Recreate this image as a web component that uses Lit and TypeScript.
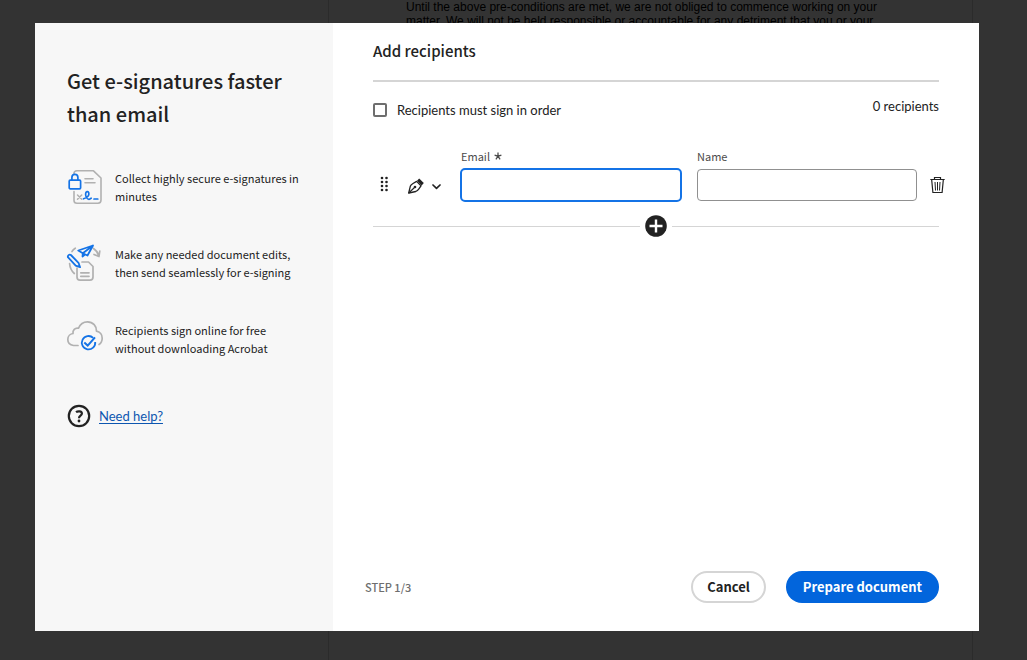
import { LitElement, html, css, svg } from "lit";
import { customElement, state } from "lit/decorators.js";

const secureIcon = html`<svg class="art" viewBox="0 0 36 36" fill="none" aria-hidden="true">
  <g stroke="#b1b1b1" stroke-width="1.6" stroke-linecap="round" stroke-linejoin="round">
    <path d="M7 5.500V4.600C7 2.400 8.400 1.800 10 1.800H26.500L34 9V31C34 33.200 33 34.200 31 34.200H10C8 34.200 7 33.200 7 31.500V22.500"/>
    <path d="M18 9.800H26M18 13.800H28"/>
    <path d="M10.500 26l4.200 4.200M14.700 26L10.500 30.200" stroke-width="1.500"/>
  </g>
  <g stroke="#1473e6" stroke-width="1.700" stroke-linecap="round" stroke-linejoin="round">
    <rect x="2.200" y="11.200" width="11.400" height="8.600" rx="1"/>
    <path d="M4.900 10.900V8.400a3 3 0 0 1 6 0V10.900"/>
    <path d="M16.500 29.800C20 28.800 22.300 26.500 21.800 24C21.300 21.900 18.600 22.200 18.600 25C18.600 28.300 20.300 30.300 22 30.300C23.300 30.300 23.700 29.600 24.200 29.200M27 30H30.800"/>
  </g>
</svg>`;

const editIcon = html`<svg class="art" viewBox="0 0 36 36" fill="none" aria-hidden="true">
  <g stroke="#b1b1b1" stroke-width="1.700" stroke-linecap="round" stroke-linejoin="round">
    <path d="M5 6.500C5.800 5.200 7 4 8.300 3.200M2.600 18.500C2.900 22.500 4.500 26 7.300 28.500"/>
    <path d="M26.500 3.500C29 5.200 31 7.300 31.800 11M27 9.500L32 11.500L32.800 6"/>
    <path d="M15 17H21.500L26 21.500V32C26 34 25 35.200 23 35.200H13C11 35.200 10 34 10 32V23"/>
    <path d="M13.800 27.800H22M13.800 31.300H22"/>
  </g>
  <g stroke="#1473e6" stroke-width="1.800" stroke-linejoin="round">
    <path d="M.9 12.200C.5 10.600 2.200 9 3.900 10L11.500 17.800L13.100 22.200L8.700 20.600Z"/>
    <path d="M11.300 5.500L26 .5L20.500 10.500L15.800 8.200ZM26 .5L15.800 8.200L15.500 11.500L18 9.500"/>
  </g>
</svg>`;

const cloudIcon = html`<svg class="art" viewBox="0 0 36 36" fill="none" aria-hidden="true">
  <path d="M11 24.500H6.500C3.200 24 .8 21.800 .8 18.500C.8 14.800 3.500 12.800 6 12.500C5.500 9.500 8 6.300 11.500 7.200C13.200 3 16.500 .8 20.500 .8C26 .8 29.800 5.200 29.500 10.200C33 10.800 35.200 13.800 35.200 17.200C35.200 20 34 22.200 32 23.500" stroke="#b1b1b1" stroke-width="1.700" stroke-linecap="round" stroke-linejoin="round"/>
  <path d="M26.200 16.900A6.700 6.700 0 1 0 28.200 21" stroke="#1473e6" stroke-width="1.800"/>
  <path d="M17.300 21.500L20.700 24.600L28 16.400" stroke="#1473e6" stroke-width="2"/>
</svg>`;

@customElement("app-root")
export class AppRoot extends LitElement {
  @state() private ordered = false;

  private benefits = [
    { icon: secureIcon, text: "Collect highly secure e-signatures in minutes" },
    { icon: editIcon, text: "Make any needed document edits, then send seamlessly for e-signing" },
    { icon: cloudIcon, text: "Recipients sign online for free without downloading Acrobat" },
  ];

  static styles = css`
    :host {
      display: block;
      position: relative;
      height: 100vh;
      overflow: hidden;
      background: #333;
      font-family: "Noto Sans CJK JP", "Noto Sans", sans-serif;
      color: #222;
    }
    * { box-sizing: border-box; }
    h1, h2, p, ul { margin: 0; padding: 0; }
    button { font: inherit; color: inherit; background: none; border: 0; padding: 0; cursor: pointer; }
    svg { display: block; flex: none; }

    .document {
      height: 100%;
      margin: 0 54px 0 328px;
      padding: 0 77px;
      border: solid #2b2b2b;
      border-width: 0 1px;
      font: 12px/14px "Liberation Sans", Arial, sans-serif;
      color: #000;
    }
    .overlay {
      position: absolute;
      inset: 0;
      display: flex;
      padding: 23px 48px 29px 35px;
    }
    .dialog { flex: 1; display: flex; background: #fff; min-width: 0; }

    .promo { flex: 0 0 298px; padding: 41px 32px; background: #f7f7f7; }
    .promo-title { font-size: 20px; line-height: 33px; font-weight: 500; }
    .benefits { list-style: none; display: grid; gap: 40px; padding-top: 39px; }
    .benefit { display: flex; align-items: center; gap: 12px; font-size: 11px; line-height: 18px; }
    .art { width: 36px; height: 36px; overflow: visible; }
    .help { display: flex; align-items: center; gap: 8px; margin-top: 47px; font-family: Lato, sans-serif; font-size: 13px; line-height: 24px; }
    .help a { color: #0d56b0; text-underline-offset: 2px; }

    .main { flex: 1; min-width: 0; display: flex; flex-direction: column; padding: 16px 40px 28px; }
    .main-title { font-size: 15px; line-height: 24px; font-weight: 500; padding-bottom: 17px; border-bottom: 2px solid #d5d5d5; }
    .options { display: flex; justify-content: space-between; padding-top: 15px; font-family: Lato, sans-serif; font-size: 13px; line-height: 18px; }
    .order { display: flex; align-items: center; gap: 10px; padding-top: 4px; }
    .order input {
      appearance: none;
      width: 14px;
      height: 14px;
      margin: 0;
      border: 2px solid #6e6e6e;
      border-radius: 2px;
      background: #fff;
    }
    .order input:checked { background: #1473e6; border-color: #1473e6; }

    .row { display: flex; align-items: flex-end; margin-right: -8px; padding-top: 28px; }
    .tool { display: flex; align-items: center; height: 34px; }
    .drag { width: 34px; padding-left: 6px; }
    .role { width: 53px; gap: 7px; }
    .fields { flex: 1; min-width: 0; display: grid; grid-template-columns: 222px 1fr; gap: 15px; }
    .field { display: grid; gap: 3px; font-size: 11px; line-height: 18px; color: #4b4b4b; }
    .label { display: flex; align-items: center; gap: 4px; padding-left: 1px; }
    .field input {
      width: 100%;
      min-width: 0;
      height: 34px;
      padding: 0 10px;
      border: 2px solid #1473e6;
      border-radius: 5px;
      outline: 0;
      font: inherit;
      background: #fff;
    }
    .field .plain { height: 32px; margin: 1px 0; border: 1px solid #909090; border-radius: 4px; }
    .field .flush { padding-left: 0; }
    .remove { width: 30px; padding-left: 13px; }

    .add { display: flex; align-items: center; gap: 5px; padding-top: 13px; }
    .rule { flex: 1; height: 1px; background: #d5d5d5; }

    .footer { display: flex; align-items: center; gap: 20px; margin-top: auto; margin-left: -8px; }
    .step { flex: 1; font-size: 11px; line-height: 16px; font-weight: 500; color: #6e6e6e; }
    .btn { height: 32px; padding: 0 14px; border-radius: 16px; font-size: 13px; line-height: 18px; font-weight: 700; white-space: nowrap; }
    .cancel { border: 2px solid #d5d5d5; }
    .primary { background: #0265dc; color: #fff; padding: 0 17px; }
  `;

  render() {
    return html`
      <div class="document">
        <p>Until the above pre-conditions are met, we are not obliged to commence working on your</p>
        <p>matter. We will not be held responsible or accountable for any detriment that you or your</p>
      </div>
      <div class="overlay">
        <section class="dialog" role="dialog" aria-labelledby="title">
          <aside class="promo">
            <h1 class="promo-title">Get e-signatures faster than email</h1>
            <ul class="benefits">
              ${this.benefits.map((b) => html`<li class="benefit">${b.icon}<span>${b.text}</span></li>`)}
            </ul>
            <div class="help">
              <svg width="24" height="24" viewBox="0 0 24 24" fill="none" aria-hidden="true">
                <circle cx="12" cy="12" r="10.200" stroke="#222" stroke-width="2.200"/>
                <path d="M9 8.200C10.500 7.100 14.900 6.700 14.900 9.600C14.900 11.900 12 11.600 12 14.300" stroke="#222" stroke-width="2.200"/>
                <circle cx="12" cy="17" r="1.400" fill="#222"/>
              </svg>
              <a href="#help">Need help?</a>
            </div>
          </aside>
          <div class="main">
            <h2 class="main-title" id="title">Add recipients</h2>
            <div class="options">
              <label class="order">
                <input type="checkbox" .checked=${this.ordered}
                  @change=${(e: Event) => (this.ordered = (e.target as HTMLInputElement).checked)} />
                Recipients must sign in order
              </label>
              <span>0 recipients</span>
            </div>
            <div class="row">
              <button class="tool drag" aria-label="Reorder recipient">
                <svg width="10" height="18" viewBox="0 0 10 18" fill="#222">
                  ${[2, 6, 10, 14].map((y) => svg`<circle cx="3" cy=${y} r="1.300"/><circle cx="7.500" cy=${y} r="1.300"/>`)}
                </svg>
              </button>
              <button class="tool role" aria-label="Recipient role">
                <svg width="18" height="18" viewBox="0 0 18 18" fill="none" stroke="#222">
                  <path d="M1.700 17L3.300 10.300C3.700 9 4.800 8.200 6 7.500L9.600 5.400L14 9.800L11.700 13.200C10.900 14.400 10 15.100 8.800 15.500Z" stroke-width="1.300" stroke-linejoin="round"/>
                  <path d="M1.700 17L7.500 11.500" stroke-width="1.100"/>
                  <circle cx="8" cy="11" r="1.300" fill="#222" stroke="none"/>
                  <path d="M10 4.700L12.200 2.500L16.800 7.100L14.700 9.400Z" fill="#222" stroke="none"/>
                </svg>
                <svg width="10" height="12" viewBox="0 0 10 12" fill="none">
                  <path d="M1 6L4.500 9.300L8 6" stroke="#222" stroke-width="1.700" stroke-linecap="round" stroke-linejoin="round"/>
                </svg>
              </button>
              <div class="fields">
                <label class="field">
                  <span class="label">Email
                    <svg width="8" height="8" viewBox="0 0 8 8" aria-hidden="true">
                      <path d="M4 .5V4.200M.6 3.200L4 4.200L7.400 3.200M1.900 7.300L4 4.200L6.100 7.300" fill="none" stroke="#4b4b4b" stroke-width="1.300"/>
                    </svg>
                  </span>
                  <input type="email" required />
                </label>
                <label class="field">
                  <span class="label flush">Name</span>
                  <input class="plain" type="text" />
                </label>
              </div>
              <button class="tool remove" aria-label="Remove recipient">
                <svg width="16" height="18" viewBox="0 0 16 18" fill="none" stroke="#222">
                  <path d="M.3 3.500H14.700M4.500 3.300V1.500H10.500V3.300" stroke-width="1.200"/>
                  <path d="M1.700 4L2.900 16.500H12.100L13.300 4" stroke-width="1.200"/>
                  <path d="M5 6L5.500 14.500M7.500 6V14.500M10 6L9.500 14.500"/>
                </svg>
              </button>
            </div>
            <div class="add">
              <span class="rule"></span>
              <button aria-label="Add recipient">
                <svg width="22" height="22" viewBox="0 0 22 22">
                  <circle cx="11" cy="11" r="10.800" fill="#222"/>
                  <path d="M11 4.500V17.500M4.500 11H17.500" stroke="#fff" stroke-width="2.400"/>
                </svg>
              </button>
              <span class="rule"></span>
            </div>
            <div class="footer">
              <span class="step">STEP 1/3</span>
              <button class="btn cancel">Cancel</button>
              <button class="btn primary">Prepare document</button>
            </div>
          </div>
        </section>
      </div>
    `;
  }
}
